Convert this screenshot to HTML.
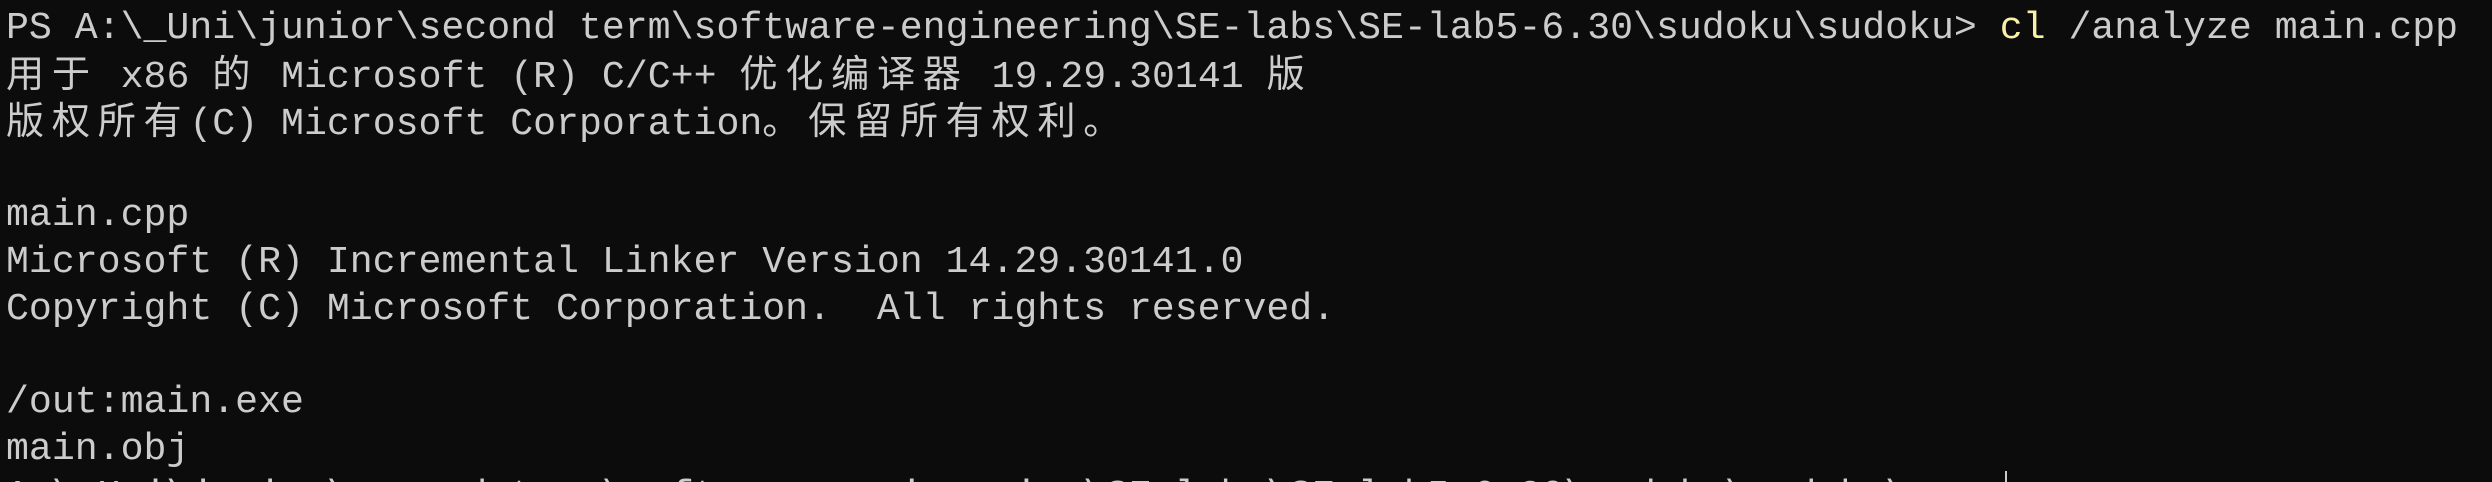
<!DOCTYPE html>
<html><head><meta charset="utf-8">
<style>
html,body{margin:0;padding:0;background:#0c0c0c;width:2492px;height:482px;overflow:hidden}
#w{position:relative;width:2492px;height:482px;overflow:hidden}
.l{position:absolute;left:6px;height:46.8px;font-family:"Liberation Mono","Noto Sans CJK SC",monospace;font-size:38.2px;line-height:46.8px;color:#cccccc;white-space:pre}
.c{letter-spacing:7.66px;font-family:"Noto Sans CJK SC",sans-serif;line-height:1}
.y{color:#f9f1a5}
.cur{position:absolute;left:2005px;top:471px;width:2px;height:11px;background:#cccccc}
</style></head><body><div id="w">
<div class="l" style="top:6px">PS A:\_Uni\junior\second term\software-engineering\SE-labs\SE-lab5-6.30\sudoku\sudoku&gt; <span class="y">cl</span> /analyze main.cpp</div>
<div class="l" style="top:52.8px"><span class="c">用于</span> x86 <span class="c">的</span> Microsoft (R) C/C++ <span class="c">优化编译器</span> 19.29.30141 <span class="c">版</span></div>
<div class="l" style="top:99.6px"><span class="c">版权所有</span>(C) Microsoft Corporation<span class="c">。保留所有权利。</span></div>
<div class="l" style="top:193.2px">main.cpp</div>
<div class="l" style="top:240px">Microsoft (R) Incremental Linker Version 14.29.30141.0</div>
<div class="l" style="top:286.8px">Copyright (C) Microsoft Corporation.  All rights reserved.</div>
<div class="l" style="top:380.4px">/out:main.exe</div>
<div class="l" style="top:427.2px">main.obj</div>
<div class="l" style="top:474px">A:\_Uni\junior\second term\software-engineering\SE-labs\SE-lab5-6.30\sudoku\sudoku\m</div>
<div class="cur"></div>
</div></body></html>
